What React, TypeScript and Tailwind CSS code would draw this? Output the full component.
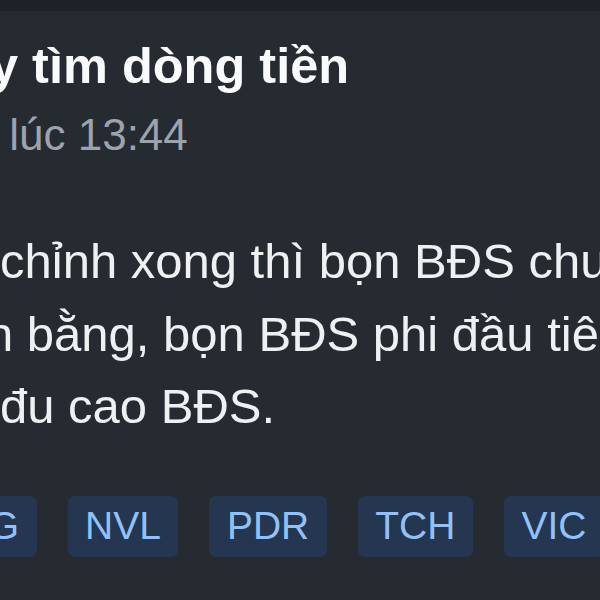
import React from "react";

export default function App() {
  const tags = ["DXG", "NVL", "PDR", "TCH", "VIC"];
  return (
    <div
      className="w-[600px] h-[600px] overflow-hidden bg-[#1e2128] flex flex-col"
      style={{ fontFamily: '"Liberation Sans", Arial, sans-serif' }}
    >
      <div className="h-[11px] shrink-0 bg-[#1e2128]" />
      <div className="flex-1 bg-[#262a31] flex flex-col">
        <div className="mt-[25px] whitespace-nowrap text-[50.5px] leading-[60px] font-bold text-[#f9fafb] ml-[-10px]">
          y tìm dòng tiền
        </div>
        <div className="mt-[13px] whitespace-nowrap text-[44px] leading-[52px] text-[#9ca3af] ml-[-3px]">
          {"\u00a0"}lúc 13:44
        </div>
        <div className="mt-[64px] flex flex-col text-[49px] leading-[72.5px] text-[#eef0f2] whitespace-nowrap">
          <div className="ml-[0px]">chỉnh xong thì bọn BĐS chung cư</div>
          <div className="ml-[-14px]">n bằng, bọn BĐS phi đầu tiên</div>
          <div className="ml-[0px]">đu cao BĐS.</div>
        </div>
        <div className="mt-[53px] flex gap-[31px] ml-[-83px]">
          {tags.map((t) => (
            <div
              key={t}
              className="h-[61px] shrink-0 px-[17.5px] rounded-[7px] bg-[#243650] text-[#90c2f9] text-[39px] flex items-center"
            >
              {t}
            </div>
          ))}
        </div>
      </div>
    </div>
  );
}
